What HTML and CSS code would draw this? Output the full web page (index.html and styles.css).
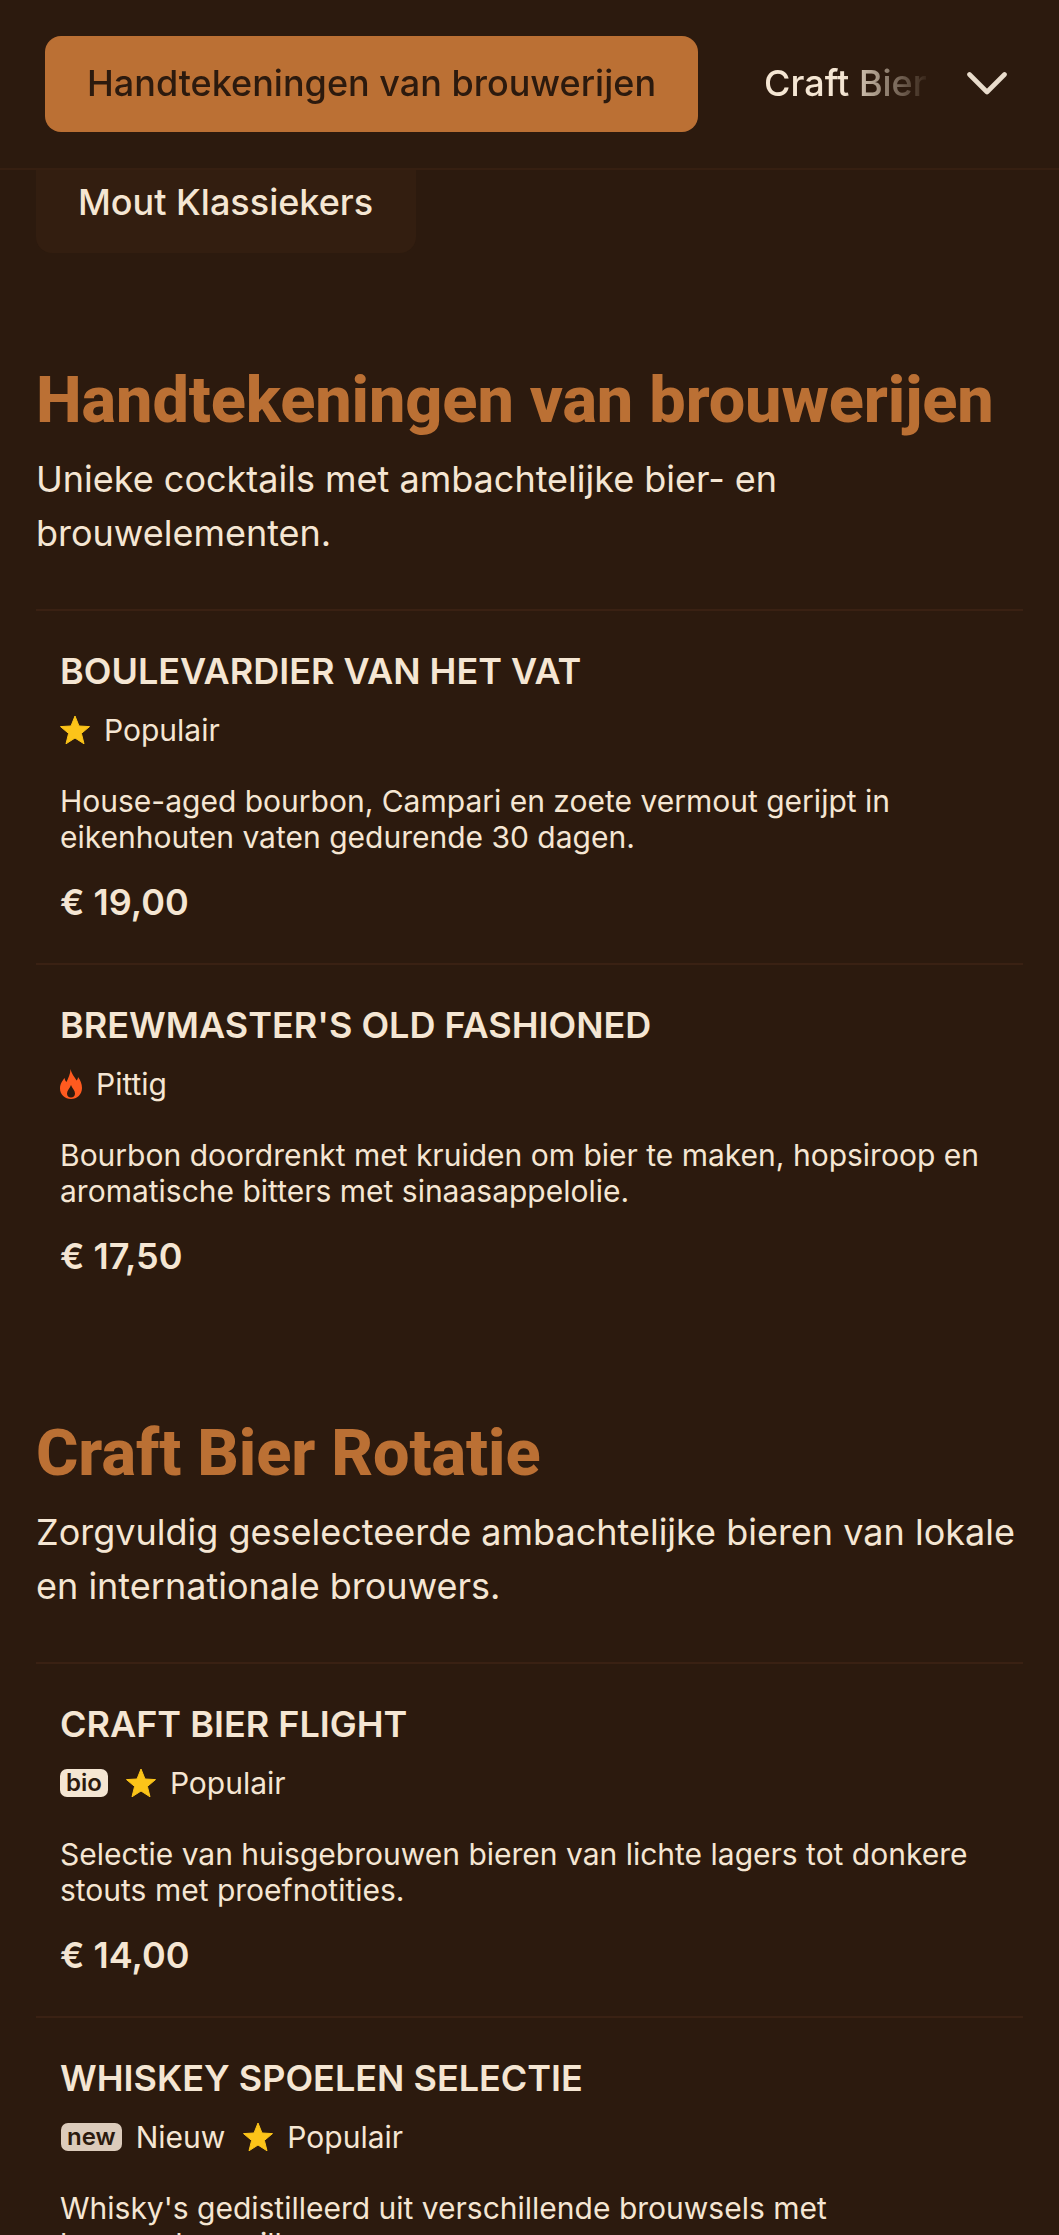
FILE: index.html
```html
<!DOCTYPE html>
<html lang="nl">
<head>
<meta charset="utf-8">
<title>Menu</title>
<link rel="stylesheet" href="styles.css">
</head>
<body>
<header class="nav">
  <div class="tabs">
    <a class="tab tab-active">Handtekeningen van brouwerijen</a>
    <a class="tab">Craft Bier Rotatie</a>
  </div>
  <svg class="chevron" viewBox="0 0 40 23" aria-hidden="true"><path d="M2.5 2.5 L20 20 L37.5 2.5" fill="none" stroke="#e9dccc" stroke-width="4.6" stroke-linecap="round" stroke-linejoin="round"/></svg>
</header>
<main class="page">
  <div class="chip-clip"><a class="chip">Mout Klassiekers</a></div>

  <section class="section section-first">
    <h2 class="section-title">Handtekeningen van brouwerijen</h2>
    <p class="section-intro">Unieke cocktails met ambachtelijke bier- en brouwelementen.</p>
    <article class="item">
      <h3 class="item-title">BOULEVARDIER VAN HET VAT</h3>
      <div class="tags">
        <span class="tag"><svg class="star" viewBox="0 0 30 30" aria-hidden="true"><path d="M15 1 L19 11 L29.5 11.6 L21.4 18.4 L24 28.8 L15 23 L6 28.8 L8.6 18.4 L.5 11.6 L11 11 Z" fill="#fcc419" stroke="#fcc419" stroke-linejoin="round"/></svg>Populair</span>
      </div>
      <p class="item-desc">House-aged bourbon, Campari en zoete vermout gerijpt in eikenhouten vaten gedurende 30 dagen.</p>
      <div class="price">€ 19,00</div>
    </article>
    <article class="item">
      <h3 class="item-title">BREWMASTER'S OLD FASHIONED</h3>
      <div class="tags">
        <span class="tag"><svg class="flame" viewBox="0 0 22 30" aria-hidden="true"><path fill-rule="evenodd" d="M10.5 0 C11.5 5 14.5 7.5 16.5 11.5 C17.5 10.5 18 9.5 18 8 C20.5 11 22 15 22 19 C22 25.5 17 30 11 30 C5 30 0 25.5 0 19.5 C0 14.5 2.5 12 4.5 9 C5 11 5.5 12 6.5 13 C8 9.5 10.5 5 10.5 0 Z M11 16 C10 19 7 21.5 7 24.5 C7 27 8.7 28.5 11 28.5 C13.3 28.5 15 27 15 24.5 C15 21.5 12 19 11 16 Z" fill="#ff5a1f"/></svg>Pittig</span>
      </div>
      <p class="item-desc">Bourbon doordrenkt met kruiden om bier te maken, hopsiroop en aromatische bitters met sinaasappelolie.</p>
      <div class="price">€ 17,50</div>
    </article>
  </section>

  <section class="section">
    <h2 class="section-title">Craft Bier Rotatie</h2>
    <p class="section-intro">Zorgvuldig geselecteerde ambachtelijke bieren van lokale en internationale brouwers.</p>
    <article class="item">
      <h3 class="item-title">CRAFT BIER FLIGHT</h3>
      <div class="tags">
        <span class="badge badge-bio">bio</span>
        <span class="tag"><svg class="star" viewBox="0 0 30 30" aria-hidden="true"><path d="M15 1 L19 11 L29.5 11.6 L21.4 18.4 L24 28.8 L15 23 L6 28.8 L8.6 18.4 L.5 11.6 L11 11 Z" fill="#fcc419" stroke="#fcc419" stroke-linejoin="round"/></svg>Populair</span>
      </div>
      <p class="item-desc">Selectie van huisgebrouwen bieren van lichte lagers tot donkere stouts met proefnotities.</p>
      <div class="price">€ 14,00</div>
    </article>
    <article class="item">
      <h3 class="item-title">WHISKEY SPOELEN SELECTIE</h3>
      <div class="tags">
        <span class="tag"><span class="badge badge-new">new</span>Nieuw</span>
        <span class="tag"><svg class="star" viewBox="0 0 30 30" aria-hidden="true"><path d="M15 1 L19 11 L29.5 11.6 L21.4 18.4 L24 28.8 L15 23 L6 28.8 L8.6 18.4 L.5 11.6 L11 11 Z" fill="#fcc419" stroke="#fcc419" stroke-linejoin="round"/></svg>Populair</span>
      </div>
      <p class="item-desc">Whisky's gedistilleerd uit verschillende brouwsels met bewaarde&nbsp;vanillearoma.</p>
    </article>
  </section>
</main>
</body>
</html>
```
FILE: styles.css
```css
* { box-sizing: border-box; }
html, body { margin: 0; padding: 0; }
body {
  background: #2c1a0e;
  color: #f5e6d3;
  font-family: Inter, "Liberation Sans", sans-serif;
  height: 2235px;
  overflow: hidden;
}
.nav {
  display: flex;
  align-items: flex-start;
  height: 170px;
  padding: 36px 52px 0 45px;
  border-bottom: 2px solid #361f11;
}
.tabs {
  flex: 1;
  min-width: 0;
  display: flex;
  gap: 24px;
  overflow: hidden;
  white-space: nowrap;
  -webkit-mask-image: linear-gradient(to right, #000 calc(100% - 85px), transparent calc(100% + 5px));
  mask-image: linear-gradient(to right, #000 calc(100% - 85px), transparent calc(100% + 5px));
}
.tab {
  flex: none;
  display: block;
  height: 96px;
  line-height: 94px;
  padding: 0 42px;
  font-size: 36px;
  font-weight: 500;
  border-radius: 16px;
}
.tab-active { background: #bb7034; color: #2c1a0e; }
.chevron { flex: none; width: 40px; height: 23px; margin: 36px 0 0 40px; }
.page { padding: 0 36px; }
.chip-clip { height: 83px; display: flex; align-items: flex-end; overflow: hidden; }
.chip {
  display: block;
  width: 380px;
  height: 120px;
  line-height: 138px;
  padding: 0 42px;
  font-size: 36px;
  font-weight: 500;
  background: #331e10;
  border-radius: 16px;
}
.section { margin-top: 99px; }
.section-first { margin-top: 110px; }
.section-title {
  margin: 0;
  color: #bb7034;
  font-family: Roboto, "Liberation Sans", sans-serif;
  font-weight: 800;
  font-size: 64.8px;
  letter-spacing: -0.09px;
  line-height: 74px;
}
.section-intro {
  margin: 15px 0 0;
  font-size: 36px;
  line-height: 54px;
}
.item {
  padding: 38px 24px 0;
  height: 354px;
  border-top: 2px solid #3a2113;
}
.section-intro + .item { margin-top: 49px; }
.item-title { margin: 0; font-size: 36px; font-weight: 600; line-height: 44px; }
.tags {
  display: flex;
  align-items: center;
  gap: 18px;
  height: 44px;
  margin-top: 15px;
}
.tag { display: inline-flex; align-items: center; gap: 14px; font-size: 30px; }
.star { width: 30px; height: 30px; flex: none; }
.flame { width: 22px; height: 30px; flex: none; }
.badge {
  display: inline-block;
  height: 28px;
  line-height: 27px;
  padding: 0 6px;
  border-radius: 7px;
  font-size: 24px;
  font-weight: 600;
  color: #2c1a0e;
}
.badge-bio { background: #f5e6d3; }
.badge-new { background: #dccbbb; margin-left: 1px; }
.item-desc { margin: 31px 0 0; font-size: 30px; line-height: 36px; }
.price { margin-top: 25px; font-size: 36px; font-weight: 600; line-height: 44px; }
```
